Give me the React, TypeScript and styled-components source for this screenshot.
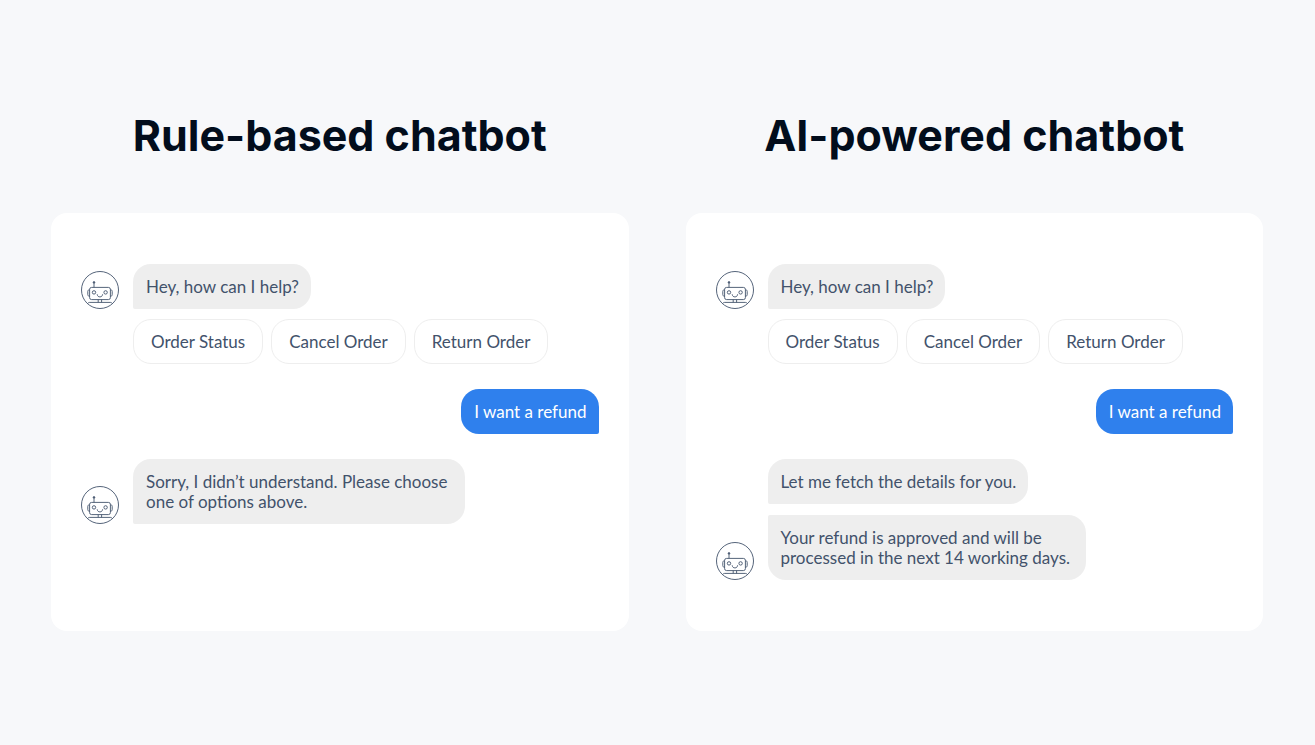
import React from "react";
import styled, { createGlobalStyle } from "styled-components";

const GlobalStyle = createGlobalStyle`
  * { box-sizing: border-box; }
  body {
    margin: 0;
    background: #f7f8fa;
    color: #42526b;
    font-family: Lato, "Liberation Sans", sans-serif;
    font-size: 17px;
    line-height: 20px;
  }
`;

const Page = styled.main`
  min-height: 100vh;
  padding: 108px 52px 40px 51px;
  display: grid;
  grid-template-columns: repeat(2, minmax(0, 1fr));
  gap: 57px;
  align-items: start;
`;

const Column = styled.section`
  display: flex;
  flex-direction: column;
  gap: 51px;
`;

const Title = styled.h2`
  margin: 0;
  text-align: center;
  white-space: nowrap;
  color: #020d1c;
  font-family: Inter, "Liberation Sans", sans-serif;
  font-weight: 700;
  font-size: 43px;
  line-height: 54px;
`;

const Card = styled.div`
  min-height: 418px;
  padding: 51px 30px;
  border-radius: 16px;
  background: #fff;
  display: flex;
  flex-direction: column;
  gap: 25px;
`;

const Exchange = styled.div`
  display: flex;
  flex-direction: column;
  gap: 10px;
`;

const BotRow = styled.div`
  display: flex;
  align-items: flex-end;
  gap: 14px;
`;

const AvatarSlot = styled.div`
  flex: none;
  width: 38px;
  height: 38px;
  svg { display: block; }
`;

const Stack = styled.div`
  display: flex;
  flex-direction: column;
  align-items: flex-start;
  gap: 11px;
`;

type Tail = "bottomLeft" | "topLeft" | "bottomRight";

const corners: Record<Tail, string> = {
  bottomLeft: "18px 18px 18px 2px",
  topLeft: "2px 18px 18px 18px",
  bottomRight: "18px 18px 2px 18px",
};

const Bubble = styled.p<{ $tail: Tail; $own?: boolean; $width?: number }>`
  margin: 0;
  padding: 13px 12px 12px 13px;
  width: ${(p) => (p.$width ? `${p.$width}px` : "auto")};
  border-radius: ${(p) => corners[p.$tail]};
  background: ${(p) => (p.$own ? "#2f80ed" : "#eeeeee")};
  color: ${(p) => (p.$own ? "#fff" : "inherit")};
  align-self: ${(p) => (p.$own ? "flex-end" : "auto")};
`;

const Options = styled.div`
  display: flex;
  gap: 8px;
  padding-left: 52px;
`;

const Option = styled.button`
  height: 45px;
  padding: 0 17px;
  border: 1px solid #eeeeee;
  border-radius: 18px;
  background: #fff;
  color: inherit;
  font: inherit;
  white-space: nowrap;
  cursor: pointer;
`;

const Avatar = () => (
  <AvatarSlot>
    <svg width="38" height="38" viewBox="0 0 38 38" fill="none" stroke="#42526b" strokeWidth="0.9" aria-hidden="true">
      <circle cx="19" cy="19" r="18.5" strokeWidth="0.9" />
      <circle cx="13" cy="11.4" r="0.8" fill="#42526b" />
      <path d="M13 12v4.4" />
      <rect x="8.6" y="16.4" width="20.8" height="12.2" rx="2" />
      <path d="M8.6 18.8c-1.3 0-1.8.6-1.8 1.6v3.2c0 1 .5 1.6 1.8 1.6M29.4 18.8c1.3 0 1.8.6 1.8 1.6v3.2c0 1-.5 1.6-1.8 1.6" />
      <circle cx="13" cy="21.4" r="1.7" />
      <circle cx="24.6" cy="21.4" r="1.7" />
      <path d="M16.2 23.3c.2 1.8 1.2 2.6 2.7 2.6s2.5-.8 2.7-2.6" />
      <path d="M17.2 28.6v2.8M20.6 28.6v2.8M6.6 32.6c.5-.8 1.1-1.2 2-1.2h20.8c.9 0 1.5.4 2 1.2" />
    </svg>
  </AvatarSlot>
);

const Opening = () => (
  <>
    <Exchange>
      <BotRow>
        <Avatar />
        <Bubble $tail="bottomLeft">Hey, how can I help?</Bubble>
      </BotRow>
      <Options>
        <Option type="button">Order Status</Option>
        <Option type="button">Cancel Order</Option>
        <Option type="button">Return Order</Option>
      </Options>
    </Exchange>
    <Bubble $tail="bottomRight" $own>I want a refund</Bubble>
  </>
);

export default function App() {
  return (
    <>
      <GlobalStyle />
      <Page>
        <Column>
          <Title>Rule-based chatbot</Title>
          <Card>
            <Opening />
            <BotRow>
              <Avatar />
              <Bubble $tail="bottomLeft" $width={332}>
                Sorry, I didn’t understand. Please choose one of options above.
              </Bubble>
            </BotRow>
          </Card>
        </Column>
        <Column>
          <Title>AI-powered chatbot</Title>
          <Card>
            <Opening />
            <BotRow>
              <Avatar />
              <Stack>
                <Bubble $tail="bottomLeft">Let me fetch the details for you.</Bubble>
                <Bubble $tail="topLeft" $width={318}>
                  Your refund is approved and will be processed in the next 14 working days.
                </Bubble>
              </Stack>
            </BotRow>
          </Card>
        </Column>
      </Page>
    </>
  );
}
